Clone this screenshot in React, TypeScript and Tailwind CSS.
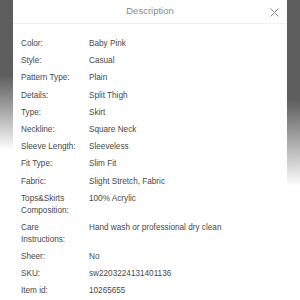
const rows: [string, string][] = [
  ["Color:", "Baby Pink"],
  ["Style:", "Casual"],
  ["Pattern Type:", "Plain"],
  ["Details:", "Split Thigh"],
  ["Type:", "Skirt"],
  ["Neckline:", "Square Neck"],
  ["Sleeve Length:", "Sleeveless"],
  ["Fit Type:", "Slim Fit"],
  ["Fabric:", "Slight Stretch, Fabric"],
  ["Tops&Skirts Composition:", "100% Acrylic"],
  ["Care Instructions:", "Hand wash or professional dry clean"],
  ["Sheer:", "No"],
  ["SKU:", "sw2203224131401136"],
  ["Item id:", "10265655"],
];

export default function App() {
  return (
    <div className="w-[300px] h-[300px] overflow-hidden flex bg-white font-['Liberation_Sans',Arial,sans-serif]">
      <div className="w-[13px] shrink-0 bg-linear-to-b from-[#5d5d5d] from-25% to-white to-50%" />
      <div className="flex-1 flex flex-col bg-white">
        <div className="h-[24px] shrink-0 relative flex items-center justify-center border-b border-[#f1f1f1]">
          <span className="text-[9.5px] text-[#8a8a8a]">Description</span>
          <svg className="absolute right-[8px] top-[8px]" width="9" height="9" viewBox="0 0 9 9">
            <path d="M0.5 0.5L8.5 8.5M8.5 0.5L0.5 8.5" stroke="#8a8a8a" strokeWidth="1" />
          </svg>
        </div>
        <div className="flex flex-col gap-[5.2px] pt-[14px] pl-[8px] text-[8.2px] leading-[12px] text-[#484848]">
          {rows.map(([k, v]) => (
            <div key={k} className="flex">
              <div className="w-[68px] shrink-0 pr-[7px]">{k}</div>
              <div>{v}</div>
            </div>
          ))}
        </div>
      </div>
      <div className="w-[13px] shrink-0 bg-linear-to-b from-[#5d5d5d] from-33% to-white to-62%" />
    </div>
  );
}
